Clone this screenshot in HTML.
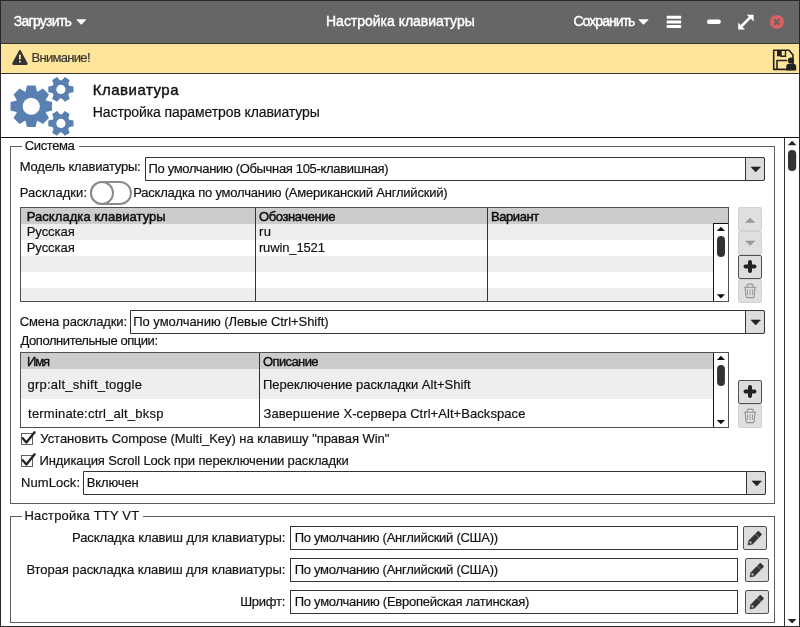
<!DOCTYPE html>
<html lang="ru">
<head>
<meta charset="utf-8">
<title>Настройка клавиатуры</title>
<style>
*{box-sizing:border-box;margin:0;padding:0}
html,body{width:800px;height:627px;overflow:hidden;background:#fff}
body{position:relative;font-family:"Liberation Sans",sans-serif;font-size:13px;color:#111}
.a{position:absolute}
.t{position:absolute;white-space:nowrap;line-height:20px;height:20px;-webkit-text-stroke:.18px currentColor}
.b{-webkit-text-stroke:.4px currentColor}
.h{-webkit-text-stroke:.5px currentColor}
.w{color:#fff;-webkit-text-stroke:.4px #fff}
.d{color:#333}
.box{position:absolute;border:1px solid #333;background:#fff}
.sel{border-radius:0 2px 2px 0}
.fs{position:absolute;border:1px solid #5e5e5e}
.lg{position:absolute;background:#fff;height:3px}
.btn{position:absolute;width:24px;height:24px;border:1px solid #505050;background:#ddd;border-radius:2px}
.btn.dis{border-color:#d2d2d2;background:#dfdfdf}
.dd{position:absolute;right:-1px;top:-1px;width:20px;height:24px;border:1px solid #333;background:#ddd;border-radius:0 2px 2px 0}
.tb{position:absolute;border:1px solid #505050;background:#fff;overflow:hidden}
.row{position:absolute;left:0;right:0}
.vl{position:absolute;width:1px;background:#333}
svg{position:absolute;overflow:visible}
</style>
</head>
<body>
<!-- title bar -->
<div class="a" style="left:0;top:0;width:800px;height:43px;background:#666"></div>
<div class="a" style="left:0;top:43px;width:800px;height:1px;background:#333"></div>
<!-- warning bar -->
<div class="a" style="left:0;top:44px;width:800px;height:29px;background:#ffe599"></div>
<div class="a" style="left:0;top:73px;width:800px;height:1px;background:#333"></div>
<!-- header line -->
<div class="a" style="left:0;top:137px;width:800px;height:1px;background:#111"></div>

<!-- icons in title bar -->
<svg style="left:0;top:0" width="800" height="140" viewBox="0 0 800 140">
 <!-- carets -->
 <path d="M77.100 19.200h8.400q1 0 .4.800l-4 4.300q-.6.500-1.200 0l-4-4.300q-.6-.800.400-.800z" fill="#fff"/>
 <path d="M639.1 19.2h8.8q1 0 .4.8l-4.200 4.300q-.6.5-1.200 0l-4.200-4.300q-.6-.8.400-.8z" fill="#fff"/>
 <!-- hamburger -->
 <rect x="666.7" y="15.800" width="14.500" height="3" rx=".6" fill="#fff"/>
 <rect x="666.7" y="20.400" width="14.500" height="3" rx=".6" fill="#fff"/>
 <rect x="666.7" y="25" width="14.500" height="3" rx=".6" fill="#fff"/>
 <!-- minus -->
 <rect x="707" y="19.400" width="13.800" height="4.600" rx="2" fill="#fff"/>
 <!-- expand -->
 <g fill="#fff" stroke="none">
  <path d="M753.600 14.800h-6.800l6.800 6.800zM738.200 29.400v-6.800l6.800 6.800z"/><path d="M741.600 26l8.600-8.600" stroke="#fff" stroke-width="2.600"/>
 </g>
 <!-- close -->
 <circle cx="776.900" cy="21.900" r="7" fill="#e06062"/>
 <path d="M774.700 19.700l4.400 4.400M779.100 19.700l-4.400 4.400" stroke="#666" stroke-width="2.300" stroke-linecap="round"/>
 <!-- warning triangle -->
 <path d="M19.100 50.500q.8-1.300 1.600 0l6.800 12.500q.7 1.700-.9 1.900h-13.400q-1.600-.2-.9-1.900z" fill="#333"/>
 <rect x="19" y="54.400" width="1.800" height="5" rx=".5" fill="#ffe599"/>
 <rect x="19" y="60.700" width="1.800" height="1.900" rx=".5" fill="#ffe599"/>
 <!-- save-as icon -->
 <g stroke="#222" fill="none" stroke-width="1.600" stroke-linejoin="round">
  <path d="M773.700 50.300h15.400l3.900 4.600v14.500h-19.300z"/>
  <path d="M777 69v-8.500h10"/>
 </g>
 <rect x="777" y="50.300" width="4" height="6" fill="#222"/>
 <path d="M781 50.300v6h4.500v-6" stroke="#222" stroke-width="1.400" fill="none"/>
 <circle cx="790.900" cy="60.500" r="3.100" fill="#222"/>
 <path d="M786.200 70.600v-3.800q0-3 3-3h4q3 0 3 3v3.800z" fill="#222"/>
 <!-- gears -->
 <path d="M37.00 120.97 L35.55 127.01 L26.95 127.01 L25.50 120.97 L24.91 120.72 L19.61 123.97 L13.53 117.89 L16.78 112.59 L16.53 112.00 L10.49 110.55 L10.49 101.95 L16.53 100.50 L16.78 99.91 L13.53 94.61 L19.61 88.53 L24.91 91.78 L25.50 91.53 L26.95 85.49 L35.55 85.49 L37.00 91.53 L37.59 91.78 L42.89 88.53 L48.97 94.61 L45.72 99.91 L45.97 100.50 L52.01 101.95 L52.01 110.55 L45.97 112.00 L45.72 112.59 L48.97 117.89 L42.89 123.97 L37.59 120.72Z M22.65 106.25 a8.60 8.60 0 1 0 17.20 0 a8.60 8.60 0 1 0 -17.20 0Z" fill="#5a80b1" fill-rule="evenodd"/>
 <path d="M69.32 85.70 L73.49 86.60 L73.49 92.20 L69.32 93.10 L68.32 94.84 L69.62 98.91 L64.77 101.71 L61.91 98.54 L59.89 98.54 L57.03 101.71 L52.18 98.91 L53.48 94.84 L52.48 93.10 L48.31 92.20 L48.31 86.60 L52.48 85.70 L53.48 83.96 L52.18 79.89 L57.03 77.09 L59.89 80.26 L61.91 80.26 L64.77 77.09 L69.62 79.89 L68.32 83.96Z M56.30 89.40 a4.60 4.60 0 1 0 9.20 0 a4.60 4.60 0 1 0 -9.20 0Z" fill="#5a80b1" fill-rule="evenodd"/>
 <path d="M69.32 119.70 L73.49 120.60 L73.49 126.20 L69.32 127.10 L68.32 128.84 L69.62 132.91 L64.77 135.71 L61.91 132.54 L59.89 132.54 L57.03 135.71 L52.18 132.91 L53.48 128.84 L52.48 127.10 L48.31 126.20 L48.31 120.60 L52.48 119.70 L53.48 117.96 L52.18 113.89 L57.03 111.09 L59.89 114.26 L61.91 114.26 L64.77 111.09 L69.62 113.89 L68.32 117.96Z M56.30 123.40 a4.60 4.60 0 1 0 9.20 0 a4.60 4.60 0 1 0 -9.20 0Z" fill="#5a80b1" fill-rule="evenodd"/>
</svg>

<!-- main scroll bar -->
<div class="vl" style="left:784px;top:138px;height:488px"></div>
<svg style="left:785px;top:138px" width="14" height="488" viewBox="785 138 14 488">
 <path d="M787.800 145.200l4.300-4.500 4.300 4.500z" fill="#222"/>
 <rect x="788" y="150" width="8.200" height="21" rx="4" fill="#333"/>
 <path d="M787.800 619.100l4.300 4.500 4.300-4.500z" fill="#222"/>
</svg>

<!-- fieldset 1 -->
<div class="fs" style="left:10px;top:146px;width:765px;height:358px"></div>
<div class="lg" style="left:22px;top:145px;width:57px"></div>
<!-- fieldset 2 -->
<div class="fs" style="left:10px;top:516px;width:765px;height:107px"></div>
<div class="lg" style="left:22px;top:515px;width:121px"></div>

<!-- select 1 -->
<div class="box sel" style="left:145px;top:157px;width:620px;height:24px"><div class="dd"></div></div>
<!-- toggle -->
<div class="a" style="left:90px;top:181px;width:42px;height:24px;border:2px solid #8c8c8c;border-radius:12px;background:#fff"></div>
<div class="a" style="left:90px;top:181px;width:24px;height:24px;border:2px solid #8c8c8c;border-radius:12px;background:#fff"></div>

<!-- table 1 -->
<div class="tb" style="left:20px;top:207px;width:709px;height:95px">
 <div class="row" style="top:0;height:16px;background:#ccc"></div>
 <div class="row" style="top:16px;height:16px;background:#eee"></div>
 <div class="row" style="top:48px;height:16px;background:#eee"></div>
 <div class="row" style="top:80px;height:16px;background:#eee"></div>
 <div class="vl" style="left:234px;top:0;height:95px"></div>
 <div class="vl" style="left:466px;top:0;height:95px"></div>
 <div class="a" style="left:692px;top:15px;width:16px;height:79px;background:#fff;border:1px solid #111;border-right:0;border-bottom:0"></div>
</div>
<svg style="left:713px;top:223px" width="16" height="79" viewBox="713 223 16 79">
 <path d="M716.800 231l4.100-4.200 4.100 4.200z" fill="#111"/>
 <rect x="717" y="236" width="8" height="21" rx="4" fill="#333"/>
 <path d="M716.800 294.200l4.100 4.200 4.100-4.200z" fill="#111"/>
</svg>
<!-- table 1 buttons -->
<div class="btn dis" style="left:738px;top:207px"></div>
<div class="btn dis" style="left:738px;top:231px"></div>
<div class="btn" style="left:738px;top:255px"></div>
<div class="btn dis" style="left:738px;top:279px"></div>
<svg style="left:738px;top:207px" width="24" height="96" viewBox="738 207 24 96">
 <path d="M745.700 222.500l4.500-4.600 4.500 4.600z" fill="#999" stroke="#999" stroke-width=".6" stroke-linejoin="round"/>
 <path d="M745.700 241l4.500 4.600 4.500-4.600z" fill="#999" stroke="#999" stroke-width=".6" stroke-linejoin="round"/>
 <path d="M750 262v9M745.500 266.500h9" stroke="#222" stroke-width="4" stroke-linecap="round"/>
 <g stroke="#939393" fill="none" stroke-width="1.100">
  <path d="M745.200 287.600l.8 8.800q.1 1.200 1.300 1.200h5.600q1.200 0 1.300-1.200l.8-8.800"/>
  <path d="M743.900 287.300h12.500M747.200 287v-1.700q0-1.200 1.200-1.200h3.500q1.200 0 1.200 1.200v1.700"/>
  <path d="M747.500 289.300v5.800M750.100 289.300v5.800M752.600 289.300v5.800" stroke-width=".9"/>
 </g>
</svg>

<!-- select 2 -->
<div class="box sel" style="left:130px;top:310px;width:635px;height:24px"><div class="dd"></div></div>

<!-- table 2 -->
<div class="tb" style="left:20px;top:352px;width:709px;height:76px">
 <div class="row" style="top:0;height:16px;background:#ccc"></div>
 <div class="row" style="top:16px;height:30px;background:#eee"></div>
 <div class="vl" style="left:238px;top:0;height:76px"></div>
 <div class="a" style="left:692px;top:-1px;width:16px;height:77px;background:#fff;border:1px solid #111;border-right:0;border-bottom:0"></div>
</div>
<svg style="left:713px;top:352px" width="16" height="76" viewBox="713 352 16 76">
 <path d="M716.800 360l4.100-4.200 4.100 4.200z" fill="#111"/>
 <rect x="717.100" y="365" width="7.800" height="21" rx="3.900" fill="#333"/>
 <path d="M716.800 420l4.100 4.200 4.100-4.200z" fill="#111"/>
</svg>
<div class="btn" style="left:738px;top:380px"></div>
<div class="btn dis" style="left:738px;top:404px"></div>
<svg style="left:738px;top:380px" width="24" height="48" viewBox="738 380 24 48">
 <path d="M750 387v9M745.500 391.500h9" stroke="#222" stroke-width="4" stroke-linecap="round"/>
 <g transform="translate(0 125)"><g stroke="#939393" fill="none" stroke-width="1.100">
  <path d="M745.200 287.600l.8 8.800q.1 1.200 1.300 1.200h5.600q1.200 0 1.300-1.200l.8-8.800"/>
  <path d="M743.900 287.300h12.500M747.200 287v-1.700q0-1.200 1.200-1.200h3.500q1.200 0 1.200 1.200v1.700"/>
  <path d="M747.500 289.300v5.800M750.100 289.300v5.800M752.600 289.300v5.800" stroke-width=".9"/>
 </g></g>
</svg>

<!-- checkboxes -->
<div class="a" style="left:21px;top:433px;width:12px;height:12px;border:1px solid #606060;background:#fff"></div>
<div class="a" style="left:21px;top:455px;width:12px;height:12px;border:1px solid #606060;background:#fff"></div>
<svg style="left:0;top:425px" width="50" height="50" viewBox="0 425 50 50">
 <path d="M22.800 438.300l3.600 4.200 8.200-10.200" stroke="#222" stroke-width="2.300" fill="none" stroke-linecap="round" stroke-linejoin="round"/>
 <path d="M22.800 460.300l3.600 4.200 8.200-10.200" stroke="#222" stroke-width="2.300" fill="none" stroke-linecap="round" stroke-linejoin="round"/>
</svg>

<!-- select 3 -->
<div class="box sel" style="left:83px;top:471px;width:683px;height:24px"><div class="dd"></div></div>

<!-- dropdown arrows -->
<svg style="left:745px;top:150px" width="20" height="350" viewBox="745 150 20 350">
 <path d="M751 167h9.400l-4.700 5z" fill="#222" stroke="#222" stroke-width=".6" stroke-linejoin="round"/>
 <path d="M751 320h9.400l-4.700 5z" fill="#222" stroke="#222" stroke-width=".6" stroke-linejoin="round"/>
 <path d="M752 481h9.400l-4.700 5z" fill="#222" stroke="#222" stroke-width=".6" stroke-linejoin="round"/>
</svg>

<!-- TTY inputs -->
<div class="box" style="left:290px;top:526px;width:448px;height:24px"></div>
<div class="box" style="left:290px;top:558px;width:448px;height:24px"></div>
<div class="box" style="left:290px;top:590px;width:448px;height:24px"></div>
<div class="btn" style="left:743px;top:526px"></div>
<div class="btn" style="left:745px;top:558px"></div>
<div class="btn" style="left:745px;top:590px"></div>
<svg style="left:740px;top:520px" width="40" height="100" viewBox="740 520 40 100">
 <g transform="translate(748.050 545) rotate(-45.600)">
  <path d="M0 0L3.600-2.550H12.600V2.550H3.600Z" fill="#333" stroke="#333" stroke-width=".5" stroke-linejoin="round"/>
  <ellipse cx="3.600" cy="0" rx="1.100" ry="1.250" fill="#c4c4c4"/>
  <path d="M13.200-2.700h3q1.200 0 1.200 1.200v3q0 1.200-1.200 1.200h-3z" fill="#333"/>
 </g>
 <g transform="translate(2 32)"><g transform="translate(748.050 545) rotate(-45.600)">
  <path d="M0 0L3.600-2.550H12.600V2.550H3.600Z" fill="#333" stroke="#333" stroke-width=".5" stroke-linejoin="round"/>
  <ellipse cx="3.600" cy="0" rx="1.100" ry="1.250" fill="#c4c4c4"/>
  <path d="M13.200-2.700h3q1.200 0 1.200 1.200v3q0 1.200-1.200 1.200h-3z" fill="#333"/>
 </g></g>
 <g transform="translate(2 64)"><g transform="translate(748.050 545) rotate(-45.600)">
  <path d="M0 0L3.600-2.550H12.600V2.550H3.600Z" fill="#333" stroke="#333" stroke-width=".5" stroke-linejoin="round"/>
  <ellipse cx="3.600" cy="0" rx="1.100" ry="1.250" fill="#c4c4c4"/>
  <path d="M13.200-2.700h3q1.200 0 1.200 1.200v3q0 1.200-1.200 1.200h-3z" fill="#333"/>
 </g></g>
</svg>

<div class="a" style="left:0;top:0;width:800px;height:627px;will-change:transform">
<div class="t w" id="t1" style="left:13.72px;top:11px;font-size:14px;letter-spacing:-0.721px">Загрузить</div>
<div class="t w" id="t2" style="left:326.03px;top:11px;font-size:14px;letter-spacing:-0.015px">Настройка клавиатуры</div>
<div class="t w" id="t3" style="left:573.47px;top:11px;font-size:14px;letter-spacing:-0.957px">Сохранить</div>
<div class="t d" id="t4" style="left:31.61px;top:48px;font-size:13px;letter-spacing:-0.709px">Внимание!</div>
<div class="t b" id="t5" style="left:92.75px;top:80px;font-size:15px;letter-spacing:0.502px">Клавиатура</div>
<div class="t " id="t6" style="left:92.83px;top:102px;font-size:14px;letter-spacing:-0.110px">Настройка параметров клавиатуры</div>
<div class="t " id="t7" style="left:24.77px;top:136px;font-size:13px;letter-spacing:-0.385px">Система</div>
<div class="t " id="t8" style="left:19.81px;top:157px;font-size:13px;letter-spacing:-0.223px">Модель клавиатуры:</div>
<div class="t " id="t9" style="left:148.43px;top:159px;font-size:13px;letter-spacing:-0.327px">По умолчанию (Обычная 105-клавишная)</div>
<div class="t " id="t10" style="left:19.81px;top:183px;font-size:13px;letter-spacing:0.048px">Раскладки:</div>
<div class="t " id="t11" style="left:133.21px;top:183px;font-size:13px;letter-spacing:-0.205px">Раскладка по умолчанию (Американский Английский)</div>
<div class="t h" id="t12" style="left:26.71px;top:207px;font-size:13px;letter-spacing:0.063px">Раскладка клавиатуры</div>
<div class="t h" id="t13" style="left:259.06px;top:207px;font-size:13px;letter-spacing:-0.407px">Обозначение</div>
<div class="t h" id="t14" style="left:490.91px;top:207px;font-size:13px;letter-spacing:-0.406px">Вариант</div>
<div class="t " id="t15" style="left:26.71px;top:222px;font-size:13px;letter-spacing:-0.046px">Русская</div>
<div class="t " id="t16" style="left:258.92px;top:222px;font-size:13px;letter-spacing:0.504px">ru</div>
<div class="t " id="t17" style="left:26.71px;top:238px;font-size:13px;letter-spacing:-0.046px">Русская</div>
<div class="t " id="t18" style="left:258.92px;top:238px;font-size:13px;letter-spacing:-0.131px">ruwin_1521</div>
<div class="t " id="t19" style="left:19.82px;top:312px;font-size:13px;letter-spacing:-0.137px">Смена раскладки:</div>
<div class="t " id="t20" style="left:133.33px;top:312px;font-size:13px;letter-spacing:-0.053px">По умолчанию (Левые Ctrl+Shift)</div>
<div class="t " id="t21" style="left:20.58px;top:331px;font-size:13px;letter-spacing:-0.448px">Дополнительные опции:</div>
<div class="t b" id="t22" style="left:27.01px;top:352px;font-size:13px;letter-spacing:-1.160px">Имя</div>
<div class="t b" id="t23" style="left:262.96px;top:352px;font-size:13px;letter-spacing:-0.599px">Описание</div>
<div class="t " id="t24" style="left:27.53px;top:375px;font-size:13px;letter-spacing:0.237px">grp:alt_shift_toggle</div>
<div class="t " id="t25" style="left:262.93px;top:375px;font-size:13px;letter-spacing:-0.001px">Переключение раскладки Alt+Shift</div>
<div class="t " id="t26" style="left:28.08px;top:404px;font-size:13px;letter-spacing:0.205px">terminate:ctrl_alt_bksp</div>
<div class="t " id="t27" style="left:263.55px;top:404px;font-size:13px;letter-spacing:0.063px">Завершение X-сервера Ctrl+Alt+Backspace</div>
<div class="t " id="t28" style="left:40.33px;top:429px;font-size:13px;letter-spacing:-0.048px">Установить Compose (Multi_Key) на клавишу &quot;правая Win&quot;</div>
<div class="t " id="t29" style="left:39.61px;top:451px;font-size:13px;letter-spacing:-0.133px">Индикация Scroll Lock при переключении раскладки</div>
<div class="t " id="t30" style="left:21.11px;top:473px;font-size:13px;letter-spacing:0.052px">NumLock:</div>
<div class="t " id="t31" style="left:86.71px;top:473px;font-size:13px;letter-spacing:-0.124px">Включен</div>
<div class="t " id="t32" style="left:24.51px;top:506px;font-size:13px;letter-spacing:0.163px">Настройка TTY VT</div>
<div class="t " id="t33" style="left:72.01px;top:528px;font-size:13px;letter-spacing:-0.088px">Раскладка клавиш для клавиатуры:</div>
<div class="t " id="t34" style="left:294.63px;top:528px;font-size:13px;letter-spacing:-0.272px">По умолчанию (Английский (США))</div>
<div class="t " id="t35" style="left:26.41px;top:560px;font-size:13px;letter-spacing:-0.066px">Вторая раскладка клавиш для клавиатуры:</div>
<div class="t " id="t36" style="left:294.63px;top:560px;font-size:13px;letter-spacing:-0.272px">По умолчанию (Английский (США))</div>
<div class="t " id="t37" style="left:240.21px;top:592px;font-size:13px;letter-spacing:-0.259px">Шрифт:</div>
<div class="t " id="t38" style="left:294.63px;top:592px;font-size:13px;letter-spacing:-0.257px">По умолчанию (Европейская латинская)</div>
</div>

<!-- window borders -->
<div class="a" style="left:0;top:0;width:800px;height:627px;border:1px solid #282828;pointer-events:none"></div>
</body>
</html>
